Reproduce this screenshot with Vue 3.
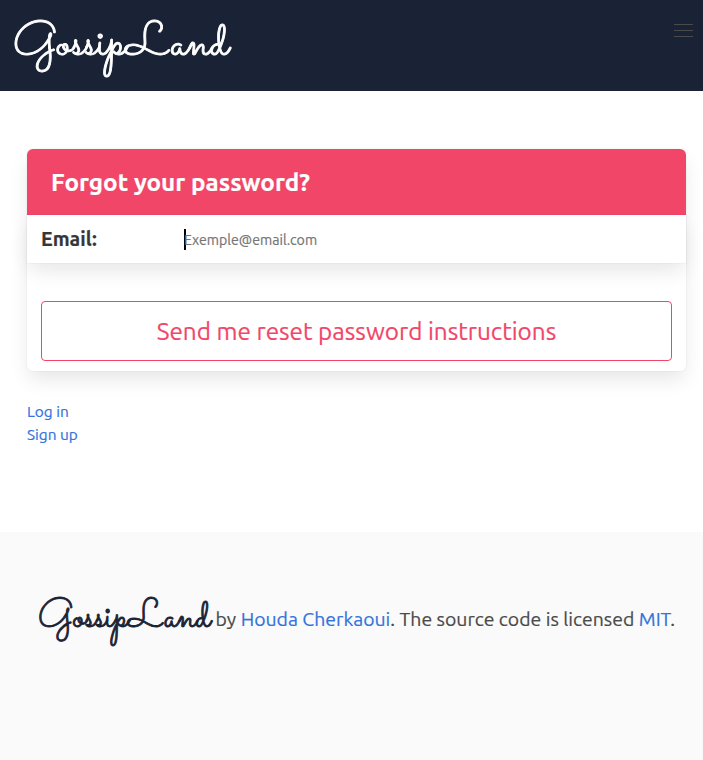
<script setup>
import { ref } from 'vue'

const email = ref('')
const menuOpen = ref(false)
</script>

<template>
  <div class="page">
    <nav class="navbar">
      <a class="brand"><span class="wordmark large">GossipLand</span></a>
      <button class="burger" type="button" aria-label="menu" @click="menuOpen = !menuOpen">
        <span></span><span></span><span></span>
      </button>
    </nav>

    <main class="main">
      <form class="card" @submit.prevent>
        <header class="card-header"><h1 class="title">Forgot your password?</h1></header>
        <div class="field">
          <label class="label" for="email">Email:</label>
          <span class="caret"></span>
          <input id="email" v-model="email" class="input" type="email" placeholder="Exemple@email.com" />
        </div>
        <div class="actions">
          <button class="submit" type="submit"><span>Send me reset password instructions</span></button>
        </div>
      </form>
      <div class="links">
        <a>Log in</a>
        <a>Sign up</a>
      </div>
    </main>

    <footer class="footer">
      <span class="wordmark small">GossipLand</span>
      <p class="credit">by <a>Houda Cherkaoui</a>. The source code is licensed <a>MIT</a>.</p>
    </footer>
  </div>
</template>

<style>
body {
  margin: 0;
  background: #fff;
}
</style>

<style scoped>
.page {
  display: flex;
  flex-direction: column;
  height: 760px;
  overflow: hidden;
  font-family: Ubuntu, "Noto Sans", sans-serif;
  color: #4a4a4a;
  -webkit-text-stroke: 0.2px currentColor;
}
.page * {
  box-sizing: border-box;
}
a {
  color: #3273dc;
  text-decoration: none;
  cursor: pointer;
}
.navbar {
  display: flex;
  justify-content: space-between;
  flex: none;
  height: 91px;
  padding: 0 10px 0 13px;
  background: #1a2335;
}
.wordmark {
  display: block;
  font-family: Sacramento, "Liberation Serif", cursive;
  font-size: 50px;
  line-height: 60px;
  white-space: nowrap;
  -webkit-text-stroke: 0.9px currentColor;
}
.large {
  transform: scaleY(0.93);
}
.brand {
  padding-top: 15px;
  color: #fff;
}
.burger {
  display: flex;
  flex-direction: column;
  gap: 5px;
  width: 19px;
  height: 37px;
  padding: 24px 0 0;
  border: 0;
  background: none;
}
.burger span {
  display: block;
  flex: none;
  width: 19px;
  height: 1px;
  background: #4a4a4a;
}
.main {
  flex: none;
  height: 441px;
  padding: 58px 17px 0 27px;
}
.card {
  height: 222px;
  border-radius: 6px;
  background: #fff;
  box-shadow: 0 10px 20px -2.5px rgba(10, 10, 10, 0.1), 0 0 0 1px rgba(10, 10, 10, 0.02);
}
.card-header {
  display: flex;
  align-items: center;
  height: 66px;
  padding-left: 24px;
  border-radius: 6px 6px 0 0;
  background: #f14668;
}
.title {
  margin: 0;
  font-size: 24.25px;
  line-height: 30px;
  font-weight: 700;
  color: #fff;
  white-space: nowrap;
}
.field {
  display: flex;
  align-items: center;
  height: 48px;
  padding: 0 14px;
  background: #fff;
  box-shadow: 0 10px 20px -2.5px rgba(10, 10, 10, 0.1), 0 0 0 1px rgba(10, 10, 10, 0.02);
}
.label {
  width: 143px;
  font-size: 19.6px;
  line-height: 28px;
  font-weight: 700;
  color: #363636;
}
.caret {
  width: 2px;
  height: 21px;
  margin-right: -2px;
  background: #000;
}
.input {
  flex: 1;
  min-width: 0;
  height: 28px;
  padding: 2px 0 0;
  border: 0;
  outline: 0;
  background: transparent;
  font-family: inherit;
  font-size: 14.15px;
  color: #363636;
}
.input::placeholder {
  color: #757575;
  opacity: 1;
}
.actions {
  padding: 38px 14px 0;
}
.submit {
  width: 100%;
  height: 60px;
  padding: 0;
  border: 1px solid #f14668;
  border-radius: 4px;
  background: #fff;
  font-family: inherit;
  font-size: 24.3px;
  line-height: 30px;
  color: #f14668;
}
.links {
  display: flex;
  flex-direction: column;
  align-items: flex-start;
  margin-top: 29px;
  font-size: 15.4px;
  line-height: 23px;
}
.footer {
  display: flex;
  flex: 1;
  padding: 56px 0 0 38px;
  background: #fafafa;
}
.small {
  width: 177.5px;
  font-size: 40px;
  color: #1a2335;
}
.credit {
  margin: 0;
  font-size: 19.42px;
  line-height: 28px;
  padding-top: 17px;
  white-space: nowrap;
}
</style>
